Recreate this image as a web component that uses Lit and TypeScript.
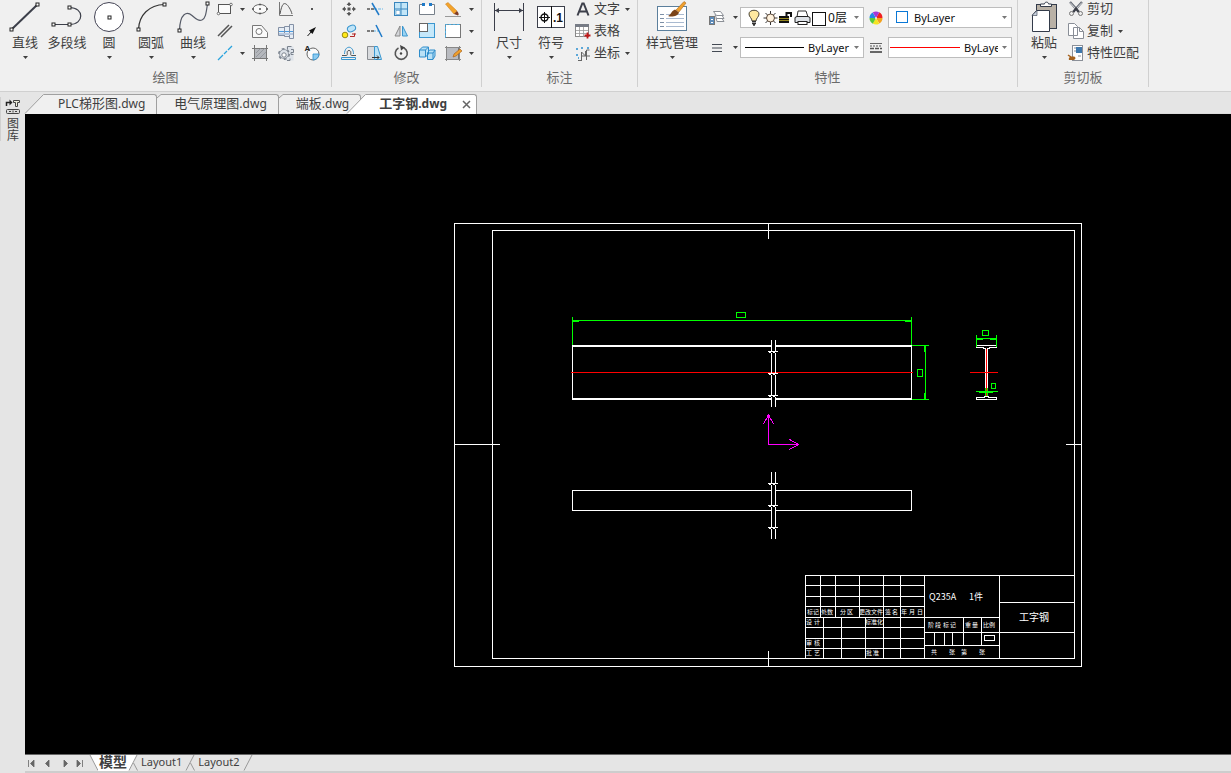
import { LitElement, html, svg, css, nothing, type TemplateResult } from "lit";
import { customElement, state } from "lit/decorators.js";

const DARK = "#3c3f4a";

/** Icon artwork is drawn in ribbon coordinates around the centre (cx, cy). */
const art = (cx: number, cy: number, w: number, h: number, body: unknown) => html`
  <svg class="art" aria-hidden="true" width=${w} height=${h} viewBox="${cx - w / 2} ${cy - h / 2} ${w} ${h}">${body}</svg>`;

const caret = html`<svg class="caret" aria-hidden="true" width="5" height="3" viewBox="0 0 5 3"><path d="M0 0h5L2.5 3z" fill="currentColor"/></svg>`;

const node = (x: number, y: number) => svg`<rect x=${x - 1.5} y=${y - 1.5} width="3" height="3" fill="#fff" stroke="#222" stroke-width="1"/>`;

/* ---------- large icons ---------- */
const lineIcon = svg`<path d="M11.5 29.5L37.5 4.5" stroke=${DARK} stroke-width="2"/>${node(11.5, 29.5)}${node(37.5, 4.5)}`;
const polylineIcon = svg`<path d="M53.5 24.5H69.5C84.500 24.500 84.500 7.500 69.500 7.500" fill="none" stroke=${DARK} stroke-width="1.200"/>${node(53.5, 24.5)}${node(69.5, 24.5)}${node(69.5, 7.5)}`;
const circleIcon = svg`<circle cx="109" cy="17" r="14.500" fill="#fff" stroke="#445"/>${node(109.5, 17.5)}`;
const arcIcon = svg`<path d="M138.500 29.500C139 15 149 5 164.500 4.500" fill="none" stroke="#333" stroke-width="1.200"/>${node(138.5, 29.5)}${node(164.5, 4.5)}`;
const splineIcon = svg`<path d="M179.500 30.500C180 13 187 11 192 15.500S199 21 202 20 206 15 207.500 3.500" fill="none" stroke="#555a66" stroke-width="1.200"/>${node(179.5, 30.5)}${node(207.5, 3.5)}`;
const dimIcon = svg`<path d="M494.500 3V31M523.500 3V31M495 10.500H523" stroke=${DARK}/><path d="M495 10.500l4-2.500v5zM523 10.500l-4-2.500v5z" fill=${DARK}/>`;
const symbolIcon = svg`<rect x="537.500" y="6.500" width="27" height="21" fill="#fff" stroke=${DARK}/><path d="M551.500 6V28M539 17.500H550M544.500 12V23" stroke="#111"/><circle cx="544.500" cy="17.500" r="3.500" fill="none" stroke="#111" stroke-width="1.400"/><text x="553" y="22" class="glyph">.1</text>`;
const styleIcon = svg`<rect x="657.500" y="6.500" width="29" height="24" fill="#fff" stroke="#5b7f9c"/>
  <path d="M660 14.500h4M660 18.500h4M660 22.500h4M660 26.500h4" stroke="#7c8fa6"/><path d="M666 14.500h18M666 18.500h18M666 22.500h18M666 26.500h18" stroke="#a9bad0"/>
  <path d="M676 10L684 1.500L686 3L679 12z" fill="#f0a02c" stroke="#a8661c" stroke-width=".600"/><path d="M668 16C671 15 671 11 675 9.500L679 12.500C678 16 672 17.500 668 16z" fill="#7a4318"/>`;
const pasteIcon = svg`<rect x="1036.500" y="4.500" width="20" height="24" fill="#b9b1a6" stroke="#333b4a"/><path d="M1040.500 6.500V4h4c0-2.500 4-2.500 4 0h3v2.500z" fill="#fff" stroke="#333b4a"/><path d="M1036.500 10.500h13v21h-17V15z" fill="#fff" stroke="#333b4a"/><path d="M1037 10.500v5h-5z" fill="#c9d2de" stroke="#333b4a" stroke-width=".600"/>`;

/* ---------- small drawing icons ---------- */
const rectI = svg`<rect x="218.500" y="4.500" width="12" height="9" fill="#fafafa" stroke="#555"/><circle cx="218.500" cy="13.500" r="1.300" fill="#fff" stroke="#555" stroke-width=".800"/><circle cx="231" cy="4.500" r="1.300" fill="#fff" stroke="#555" stroke-width=".800"/>`;
const ellipseI = svg`<ellipse cx="260" cy="9" rx="7" ry="4.500" fill="#fafafa" stroke="#666"/><path d="M259 9h2M259 4.500h2M252 9h2M266 9h2M259 13.500h2" stroke="#555" stroke-width="1.500"/>`;
const graphI = svg`<path d="M279.500 2V15.500H293" stroke="#777" fill="none"/><path d="M280 14C282 3 284 3 286 4S291 10 292 14" fill="none" stroke="#555"/>`;
const pointI = svg`<rect x="311" y="8" width="2" height="2" fill="#555"/>`;
const parallelI = svg`<path d="M218 36L229 25M221 37L232 26" stroke="#555" stroke-width="1.500"/>`;
const regionI = svg`<path d="M252.500 37.500V25.500H261.500L267.500 32.500V37.500z" fill="#fafafa" stroke="#777"/><circle cx="259" cy="31.500" r="3" fill="#fff" stroke="#777"/>`;
const shaftI = svg`<path d="M278.500 27.500h6v-1h5v-2h4v14h-4v-2h-5v-1h-6z" fill="#e6edf5" stroke="#8390a5"/><path d="M279 31.500h14" stroke="#4a9be0"/><path d="M284.500 27v9M289.500 25v13" stroke="#8390a5"/><path d="M279 34h14" stroke="#b8c8de" stroke-width="2"/>`;
const leaderI = svg`<path d="M307.500 36L312 31" stroke="#111"/><path d="M316 27L309 30.500L312.500 34z" fill="#111"/>`;
const axisI = svg`<path d="M218 60L223 55M224 54L227 51M228 50L232 46" stroke="#29a3de" stroke-width="1.300"/>`;
const hatchI = svg`<rect x="255" y="48" width="11" height="11" fill="#b4b7bc"/><path d="M252 48.500h16M252 58.500h16M254.500 45v16M266.500 45v16" stroke="#777"/><path d="M256 57l9-9M256 53l5-5M260 58l6-6" stroke="#8a8d92" stroke-width=".700"/>`;
const gearI = svg`<path d="M285.500 46.500h8v14h-8z" fill="#dde2e9"/><path d="M287.500 49v-2.500h4M291 49.500h2.500v3H291v2h2.500M290 58.500v2h-3" fill="none" stroke="#7a828d"/>
  <circle cx="284" cy="54" r="5" fill="#dde2e9" stroke="#7a828d" stroke-width="2" stroke-dasharray="2.600 2.600"/><circle cx="284" cy="54" r="4.500" fill="#dde2e9" stroke="#7a828d" stroke-width=".700"/><circle cx="284" cy="55" r="2.200" fill="#fff" stroke="#7a828d"/>`;
const detailI = svg`<circle cx="313" cy="54" r="6" fill="#fafafa" stroke="#666"/><path d="M313 54h6a6 6 0 0 1-6 6z" fill="#8dcbf0" stroke="#2a8fd0" stroke-width=".800"/><text x="304.500" y="51" class="tiny">A</text>`;

/* ---------- small editing icons ---------- */
const moveI = svg`<path d="M349 3v3M349 12v3M343 9h3M352 9h3" stroke="#555" stroke-width="1.500"/><path d="M346.500 5L349 2l2.500 3zM346.500 13L349 16l2.500-3zM345 6.500L342 9l3 2.500zM353 6.500L356 9l-3 2.500z" fill="#555"/><rect x="347.500" y="7.500" width="3" height="3" fill="#555"/>`;
const trimI = svg`<path d="M367 9h7" stroke="#555" stroke-dasharray="3 1" stroke-width="1.500"/><path d="M374 9h9" stroke="#63b5e8" stroke-dasharray="3 1"/><path d="M372 3L379 15" stroke="#1f7ac8" stroke-width="1.500"/>`;
const arrayI = svg`<rect x="394.500" y="2.500" width="13" height="13" fill="#c3e6f8" stroke="#3a86bd"/><path d="M401 2.500V15.500M394.500 9H407.500" stroke="#3a86bd"/><rect x="396" y="10.500" width="4" height="4" fill="#fff" stroke="#3a86bd" stroke-width=".500"/>`;
const breakI = svg`<path d="M424 4.500h-4.500v10h15v-10H430" fill="#fff" stroke="#77808a"/><path d="M422 4.500h3M429 4.500h3" fill="none" stroke="#1f7ac8" stroke-width="3"/>`;
const eraseI = svg`<path d="M445.500 4L448 2.500L457 11L454 14z" fill="#f3a32b" stroke="#c77713" stroke-width=".500"/><path d="M457 11l-3 3 4 1.500c1-1 1-2-1-4.500z" fill="#7f3c25"/><path d="M445 16.500h16" stroke="#999"/>`;
const copyI = svg`<circle cx="345" cy="35" r="2.800" fill="#ffe81a" stroke="#7d7200" stroke-width=".800"/><ellipse cx="351.500" cy="28.500" rx="4.300" ry="3" transform="rotate(-25 351.500 28.500)" fill="#bfe4f7" stroke="#3a96cf"/><path d="M350 36.500h4.500v-3M352 34h4" fill="none" stroke="#b32828"/>`;
const extendI = svg`<path d="M367 31h7" stroke="#555" stroke-dasharray="3 1" stroke-width="1.500"/><path d="M374 31h5" stroke="#63b5e8" stroke-dasharray="2 1"/><path d="M376 25L382 37" stroke="#1f7ac8" stroke-width="1.500"/>`;
const mirrorI = svg`<path d="M400 26v10h-5z" fill="#d4d6da" stroke="#888"/><path d="M402.500 26v10h5z" fill="#9bd3f2" stroke="#3a96cf"/>`;
const scaleI = svg`<rect x="419.500" y="23.500" width="15" height="14" fill="#c5e8fa" stroke="#3a96cf"/><rect x="419.500" y="23.500" width="8" height="8" fill="#fff" stroke="#666"/>`;
const stretchI = svg`<rect x="445.500" y="24.500" width="15" height="13" fill="#fff" stroke="#777"/><path d="M445.500 37.500V24.500H460" fill="none" stroke="#4fb0e5" stroke-dasharray="3 1"/>`;
const offsetI = svg`<path d="M342 55.500h4.500c2 0-1-5 2.500-5s.500 5 2.500 5h4.500" fill="none" stroke="#555"/><path d="M341.500 59.500h14v-2h-14zM344.500 54c0-9 9-9 9 0" fill="none" stroke="#3a96cf"/>`;
const taperI = svg`<path d="M367.500 46.500h7v13h-7z" fill="#d9dbde" stroke="#8a8d92"/><path d="M374.500 46.500h3l4 13h-7z" fill="#b9e1f6" stroke="#3a96cf"/><path d="M372 57.500h7M377 55.500l2 2-2 2" fill="none" stroke="#333"/>`;
const rotateI = svg`<path d="M398.500 48A6 6 0 1 0 404 48" fill="none" stroke="#555" stroke-width="1.600"/><path d="M400 45l5 2.500-4 3z" fill="#444"/><circle cx="401" cy="53.500" r="1.200" fill="#444"/>`;
const blockI = svg`<path d="M419.500 50l3-3h6v7l-3 3h-6zM427.500 53l2-3h5.500v6l-2 3.500h-5.500z" fill="#b9e1f6" stroke="#2f8dcb"/><path d="M419.500 50h6v7M425.500 50l3-3M427.500 53h5.500v6M433 53l2-3" fill="none" stroke="#2f8dcb"/>`;
const hatchEditI = svg`<rect x="446.500" y="47.500" width="12" height="12" fill="#b9bbc0" stroke="#777"/><path d="M445 47.500h16M445 59.500h16M446.500 46v15M459.500 46v15" stroke="#888"/><path d="M453 57l1-3 6-5 2 2-6 5z" fill="#f0a02c" stroke="#a05a17" stroke-width=".600"/>`;

/* ---------- annotation, property and clipboard icons ---------- */
const textI = svg`<path d="M577.500 15.500L582.300 3.500h1.400L588.500 15.500M579.500 11.500h7" fill="none" stroke="#3c3f4a" stroke-width="2"/>`;
const tableI = svg`<rect x="575.500" y="24.500" width="13" height="12" fill="#fff" stroke="#888"/><path d="M575 25.500h14" stroke="#777c86" stroke-width="3"/><path d="M579.500 27v10M583.500 27v10M576 30.500h12M576 33.500h12" stroke="#999" stroke-width=".800"/><path d="M587.500 32.500v6M584.500 35.500h6" stroke="#c01818" stroke-width="1.800"/>`;
const coordI = svg`<path d="M581.500 60V52l4 4v-5M578 60.500h4M586.500 60V50h3M581 56h9" fill="none" stroke="#666"/><path d="M577 48v3M581 48h2M587 48h2M577 54v2M578 58h1" stroke="#2a8fd0" stroke-width="1.500" stroke-dasharray="2 1"/>`;
const layersI = svg`<path d="M713.500 11.500h7l3 4-7 0zM715 14.500l1.500 4h7.500l-2-3M716 18l1 3.500h7l-2-3" fill="#fff" stroke="#8b8f96"/><rect x="709.500" y="16.500" width="5" height="8" fill="#5e8cba" stroke="#777"/><path d="M711 19.500h2M711 22.500h2" stroke="#fff"/>`;
const linesI = svg`<path d="M712 44.500h10M712 48h10M712 51.500h10" stroke="#444a54" stroke-width="1.200"/>`;
const wheelColors = ["#f02020", "#f4a21c", "#f5e521", "#57ca3a", "#2386e8", "#a436d8"];
const wheelI = svg`${wheelColors.map((c, i) => svg`<path d="M875 18L881.500 18A6.500 6.500 0 0 1 878.250 23.600z" transform="rotate(${i * 60 - 60} 875 18)" fill=${c}/>`)}<circle cx="875" cy="18" r="1" fill="#f6e6ef"/>`;
const weightI = svg`<path d="M869 43.500h12" stroke="#666"/><path d="M869 46h12" stroke="#555" stroke-dasharray="2 1"/><path d="M869 48.500h12" stroke="#555" stroke-width="1.500" stroke-dasharray="4 1"/><path d="M869 52h12" stroke="#666" stroke-width="2"/>`;
const cutI = svg`<path d="M1071 2L1080 12M1083 2L1074 12" stroke="#666b75" stroke-width="2.400"/><path d="M1071 2.500L1077 9M1083 2.500L1077 9" stroke="#d7dade"/><path d="M1074.500 12L1077 8.500L1079.500 12" fill="none" stroke="#3c3f48" stroke-width="2"/><circle cx="1072.500" cy="13.500" r="2" fill="#eee" stroke="#777"/><circle cx="1081.500" cy="13.500" r="2" fill="#eee" stroke="#777"/>`;
const copyDocI = svg`<path d="M1069.500 23.500h6l3 3v9h-9zM1074.500 27.500h6l4 4v7h-10z" fill="#fff" stroke="#898e97"/><path d="M1080.500 27.500v4h4" fill="none" stroke="#898e97"/>`;
const matchI = svg`<rect x="1073.500" y="45.500" width="10" height="15" fill="#fff" stroke="#8a8f98"/><rect x="1077" y="47" width="6" height="6" fill="#3d78ae"/><path d="M1075 48h2M1075 51h2M1079 56h3" stroke="#8a8f98"/><path d="M1070 60c-1-3 2-4 5-3.500 2 .500 2 3-.500 3.500z" fill="#a5611d"/><path d="M1069 55l3 2" stroke="#a5611d" stroke-width="1.500"/>`;
const bulbI = svg`<path d="M748.500 21c0-3-3-4-3-7 0-5 10-5 10 0 0 3-3 4-3 7z" fill="#ffe9a0" stroke="#4a4538"/><path d="M748.500 21.500h4M748.500 23.500h4M749.500 25h2" stroke="#333" stroke-width="1.400"/>`;
const sunI = svg`<path d="M767.500 11v14M760.500 18h14M762.500 13l10 10M772.500 13l-10 10" stroke="#333"/><circle cx="767.500" cy="18" r="4" fill="#fff2dd" stroke="#5a4636"/>`;
const lockI = svg`<path d="M783.500 17V13h4.500v4" fill="none" stroke="#111" stroke-width="2"/><rect x="776" y="16" width="10" height="7" fill="#111"/><path d="M776 18.500h10M776 20.500h10" stroke="#b7a624" stroke-width=".800"/>`;
const printI = svg`<path d="M793.500 17l1-6h8l2 6" fill="#fff" stroke="#333"/><path d="M791.500 17.500l2-1h11l2 1v5h-15z" fill="#dfe3e8" stroke="#222"/><rect x="794.500" y="21.500" width="9" height="3" fill="#fff" stroke="#222"/>`;

type Small = { name: string; cx: number; icon: unknown; menu?: boolean };
const drawTools: Small[][] = [
  [{ name: "矩形", cx: 225, icon: rectI, menu: true }, { name: "椭圆", cx: 260, icon: ellipseI }, { name: "公式曲线", cx: 286, icon: graphI }, { name: "点", cx: 312, icon: pointI }],
  [{ name: "平行线", cx: 225, icon: parallelI }, { name: "轮廓", cx: 260, icon: regionI }, { name: "轴孔", cx: 286, icon: shaftI }, { name: "箭头", cx: 312, icon: leaderI }],
  [{ name: "中心线", cx: 225, icon: axisI, menu: true }, { name: "剖面线", cx: 260, icon: hatchI }, { name: "齿轮", cx: 286, icon: gearI }, { name: "局部放大", cx: 312, icon: detailI }],
];
const editTools: Small[][] = [
  [{ name: "平移", cx: 349, icon: moveI }, { name: "裁剪", cx: 375, icon: trimI }, { name: "阵列", cx: 401, icon: arrayI }, { name: "打断", cx: 427, icon: breakI }, { name: "删除", cx: 453, icon: eraseI, menu: true }],
  [{ name: "平移复制", cx: 349, icon: copyI }, { name: "延伸", cx: 375, icon: extendI }, { name: "镜像", cx: 401, icon: mirrorI }, { name: "缩放", cx: 427, icon: scaleI }, { name: "拉伸", cx: 453, icon: stretchI, menu: true }],
  [{ name: "等距线", cx: 349, icon: offsetI }, { name: "过渡", cx: 375, icon: taperI }, { name: "旋转", cx: 401, icon: rotateI }, { name: "分解", cx: 427, icon: blockI }, { name: "编辑填充", cx: 453, icon: hatchEditI, menu: true }],
];

@customElement("cad-drawing")
export class CadDrawing extends LitElement {
  static styles = css`
    :host { display: block; background: #000; overflow: hidden; }
    svg { display: block; width: 100%; height: auto; }
    .w { stroke: #fff; } .g { stroke: #0f0; } .r { stroke: #f00; } .m { stroke: #f0f; }
    text { fill: #fff; stroke: none; font-family: "Noto Sans CJK SC", sans-serif; font-size: 6px; }
    text.title { font-size: 10px; }
    text.code { font-family: "Noto Sans CJK SC", sans-serif; font-size: 9px; }
  `;

  private breaks(top: number) {
    return svg`<path class="w" d="M771 ${top}v66M775 ${top}v66"/>
      ${[11, 33, 55].map((d) => svg`<path class="w" d="M768 ${top + d}h9M769 ${top + d + 1}h1M773 ${top + d + 1}h1"/>
        <path stroke="#000" d="M771 ${top + d + 1}h.01M775 ${top + d + 1}h.01"/>`)}`;
  }

  render() {
    const labels: [number, number, string][] = [
      [807, 614, "标记"], [821, 614, "处数"], [840, 614, "分"], [847, 614, "区"], [859, 614, "更改文件"], [885, 614, "签"], [892, 614, "名"],
      [901, 614, "年"], [909, 614, "月"], [917, 614, "日"], [806, 624, "设"], [814, 624, "计"], [865, 624, "标准化"],
      [806, 645, "审"], [814, 645, "核"], [806, 655, "工"], [814, 655, "艺"], [866, 655, "批"], [873, 655, "准"],
      [928, 627, "阶"], [935, 627, "段"], [943, 627, "标"], [950, 627, "记"], [965, 627, "重"], [972, 627, "量"], [983, 627, "比"], [989, 627, "例"],
      [931, 654, "共"], [949, 654, "张"], [961, 654, "第"], [979, 654, "张"],
    ];
    return html`<svg viewBox="25 114 1206 640" role="img" aria-label="工字钢">
      <g transform="translate(.5 .5)" fill="none" stroke-width="1" stroke-linecap="square" shape-rendering="crispEdges">
        <path class="w" d="M454 223H1081V666H454zM492 230H1074V658H492zM768 223V238M768 651V666M454 444H499M1066 444H1081"/>
        <path class="w" d="M572 345H771M775 345H911M572 346H771M775 346H911M572 398H771M775 398H911M572 399H771M775 399H911M572 345V399M911 345V399"/>
        <path class="r" d="M571 372H912"/>
        <path class="w" d="M771 490H572V510H771M775 490H911V510H775"/>
        ${this.breaks(340)}${this.breaks(472)}
        <path class="g" d="M572 317V344M911 317V344M572 320H911M572 321H578M905 321H911M736 312H745V317H736z"/>
        <path class="g" d="M912 345H928M912 399H928M925 345V399M924 345V351M924 393V399M917 369H922V376H917z"/>
        <path class="w" d="M976 345H996V347H989M976 345V347H983M983 348H985V396M989 348H987V396M984 396H988M976 397H984M976 397V399H996V397H988"/>
        <path class="r" d="M970 372H997M986 349V395"/>
        <path class="g" d="M976 335V346M996 335V346M976 338H996M976 339H982M990 339H996M982 330H988V335H982z"/>
        <path class="g" d="M976 391H997M979 392H992M985 388V395M987 388V395M991 383H995V388H991z"/>
        <path class="m" d="M768 414V444H798M768 415L763 423M768 415L773 423M798 444L789 439M798 444L789 449M767 415H769M797 443V445"/>
        <path class="w" d="M805 658V575H1074M805 585H924M805 596H924M805 606H924M805 617H999M805 627H924M805 638H924M805 648H924"/>
        <path class="w" d="M820 575V617M835 575V617M859 575V617M883 575V658M900 575V658M924 575V658M823 617V658M841 617V658M865 617V658"/>
        <path class="w" d="M999 575V658M999 602H1074M924 632H1074M924 645H999M963 617V645M981 617V645M934 632V645M944 632V645M952 632V645M984 635H994V640H984z"/>
      </g>
      ${labels.map(([x, y, t]) => svg`<text x=${x} y=${y}>${t}</text>`)}
      <text class="code" x="929" y="600">Q235A</text>
      <text class="code" x="969" y="600">1件</text>
      <text class="title" x="1019" y="621">工字钢</text>
    </svg>`;
  }
}

@customElement("app-root")
export class AppRoot extends LitElement {
  static styles = css`
    :host {
      display: flex; flex-direction: column; min-height: 100vh; background: #e5e5e5; color: #3f3f3f;
      font: 13px/20px "Noto Sans", "Noto Sans CJK SC", sans-serif; --line: #d0d0d0;
    }
    button { font: inherit; color: inherit; background: none; border: 0; padding: 0; margin: 0; white-space: nowrap; }
    svg { display: block; overflow: visible; flex: none; }
    .ribbon { display: flex; background: #f0f0f0; border-bottom: 1px solid var(--line); padding-bottom: 4px; font-family: "Noto Sans CJK SC", sans-serif; }
    .group { display: flex; flex-direction: column; border-right: 1px solid var(--line); }
    .tools { display: flex; height: 67px; }
    .caption { text-align: center; color: #6b6b6b; font-size: 13px; line-height: 20px; }
    .big { display: flex; flex-direction: column; align-items: center; width: 42px; height: 62px; }
    .big .caret { margin-top: 4px; }
    .wide { width: 60px; }
    .draw { padding-left: 4px; padding-right: 7px; }
    .edit { padding-left: 4px; padding-right: 5px; }
    .note { padding-left: 6px; padding-right: 7px; }
    .prop { padding-left: 4px; padding-right: 5px; }
    .clip { padding-left: 5px; padding-right: 9px; }
    .rows { display: flex; flex-direction: column; margin-top: -2px; }
    .rows.text { margin-left: 2px; }
    .row { display: grid; height: 22px; align-items: center; justify-items: center; }
    .row.d { grid-template-columns: 22px 12px 24px 28px 24px; }
    .row.e { grid-template-columns: repeat(5, 26px) 10px; }
    .textrow { display: flex; align-items: center; height: 22px; gap: 2px; }
    .textrow span { padding-bottom: 2px; }
    .textrow .caret { margin-left: 3px; }
    .props { display: grid; grid-template-columns: 28px 10px 124px 24px 124px; grid-auto-rows: 21px; row-gap: 9px; padding-top: 7px; justify-items: center; align-items: center; align-content: start; }
    .combo { display: flex; align-items: center; box-sizing: border-box; width: 124px; height: 21px; border: 1px solid #bdbdbd; background: #fff; padding: 0 4px; color: #111; }
    .combo select { appearance: none; flex: 1; min-width: 0; border: 0; padding: 0; margin: 0 4px 0 0; background: none; color: inherit; font: 11px/16px "Noto Sans", "Noto Sans CJK SC", sans-serif; outline: none; }
    .combo .caret { color: #777; }
    .combo select.layer { font-size: 12px; margin: 0 0 0 1px; }
    .combo .sample { margin-right: 4px; }
    .rule { height: 1px; background: #000; flex: none; width: 59px; margin-right: 4px; }
    .rule.red { background: #f00; width: 70px; margin-left: -3px; }
    .glyph { font: bold 12px "Liberation Sans", sans-serif; fill: #111; }
    .tiny { font: bold 8px "Liberation Sans", sans-serif; fill: #222; }
    .body { display: flex; flex: 1; }
    .side { width: 25px; padding-top: 5px; box-sizing: border-box; flex: none; }
    .library { display: flex; flex-direction: column; align-items: center; width: 24px; border-left: 1px solid var(--line); box-sizing: border-box; gap: 2px; font: 12px/12px "Noto Sans CJK SC", sans-serif; }
    .library span { writing-mode: vertical-rl; }
    .work { display: flex; flex-direction: column; flex: 1; min-width: 0; }
    .tabs { display: flex; align-items: flex-end; height: 22px; box-sizing: border-box; border-bottom: 1px solid #dcdcdc; }
    .tab { display: flex; height: 20px; margin-bottom: -1px; }
    .tab .face { display: flex; align-items: center; border-top: 1px solid #a0a0a0; border-right: 1px solid #a0a0a0; border-top-right-radius: 3px; background: #f0f0f0; padding: 0 11px 0 12px; box-sizing: border-box; height: 20px; }
    .tab .face button { padding-bottom: 2px; }
    .tab.first .face { padding-left: 14px; }
    .tab.active { margin-left: -14px; font-weight: bold; position: relative; }
    .tab.active .face { background: #fff; padding: 0 5px 0 13px; }
    .latin { font-size: 12px; }
    .tab .face .close { width: 9px; height: 9px; padding: 0; margin-left: 15px; color: #666; }
    cad-drawing { flex: 1; }
    .sheets { display: flex; height: 19px; box-sizing: border-box; border-top: 1px solid #666; border-bottom: 2px solid #cdcdcd; font-size: 11px; line-height: 14px; }
    .nav { display: flex; width: 65px; color: #666; }
    .nav button { flex: 1; }
    .sheet { display: flex; height: 16px; }
    .sheet .name { padding: 0 4px 2px 4px; }
    .sheet.active { font-weight: bold; font-size: 14px; line-height: 14px; }
    .sheet.active .name { background: #fff; padding: 0 2px 2px 1px; }
  `;

  @state() private doc = 3;
  @state() private sheet = 0;

  private big(label: string, cx: number, icon: unknown, menu = true, wide = false) {
    return html`<button class="big ${wide ? "wide" : ""}">${art(cx, 16, 36, 32, icon)}<span>${label}</span>${menu ? caret : nothing}</button>`;
  }

  private grid(rows: Small[][], kind: "d" | "e") {
    return html`<div class="rows">${rows.map((row, r) => html`<div class="row ${kind}">
      ${row.map((t, i) => html`<button aria-label=${t.name}>${art(t.cx, 9 + r * 22, 18, 18, t.icon)}</button>
        ${t.menu ? html`<button aria-label="${t.name}选项">${caret}</button>` : kind === "d" && i === 0 ? html`<span></span>` : nothing}`)}
    </div>`)}</div>`;
  }

  private textTool(label: string, cx: number, cy: number, icon: unknown, menu = false) {
    return html`<button class="textrow">${art(cx, cy, 18, 18, icon)}<span>${label}</span>${menu ? caret : nothing}</button>`;
  }

  private mixed(text: string) {
    return text.split(/([\x20-\x7e]+)/).map((p) => (/^[\x20-\x7e]/.test(p) ? html`<span class="latin">${p}</span>` : p));
  }

  private group(kind: string, caption: string, tools: TemplateResult) {
    return html`<section class="group" aria-label=${caption}><div class="tools ${kind}">${tools}</div><div class="caption">${caption}</div></section>`;
  }

  private docTab(name: string, i: number) {
    const active = i === this.doc;
    const slope = i === 0 || active ? 19 : 5;
    const fill = active ? "#fff" : "#f0f0f0";
    const edge = slope === 19
      ? html`<svg width="19" height="20" viewBox="0 0 19 20" aria-hidden="true"><path d="M0 20L19 0V20z" fill=${fill}/><path d="M0 19.500L18.500.500H19" fill="none" stroke="#a0a0a0"/></svg>`
      : html`<svg width="5" height="20" viewBox="0 0 5 20" aria-hidden="true"><path d="M0 4L4 0H5V20H0z" fill=${fill}/><path d="M0 4L4 .500H5" fill="none" stroke="#a0a0a0"/></svg>`;
    return html`<div class="tab ${active ? "active" : i === 0 ? "first" : ""}">${edge}<div class="face">
      <button role="tab" aria-selected=${active}>${this.mixed(name)}</button>
      ${active ? html`<button class="close" aria-label="关闭"><svg width="9" height="9" viewBox="0 0 9 9"><path d="M1 1l7 7M8 1L1 8" stroke="currentColor" stroke-width="1.500"/></svg></button>` : nothing}
    </div></div>`;
  }

  render() {
    const navs: [string, string][] = [["第一页", "M3.500 5v7M9 5v7L5.500 8.500z"], ["上一页", "M8 5v7L4.500 8.500z"], ["下一页", "M6 5v7l3.500-3.500z"], ["最后一页", "M3 5v7l3.500-3.500zM8.500 5v7"]];
    const sheets = ["模型", "Layout1", "Layout2"];
    return html`
      <header class="ribbon">
        ${this.group("draw", "绘图", html`
          ${this.big("直线", 25, lineIcon)}${this.big("多段线", 67, polylineIcon, false)}${this.big("圆", 109, circleIcon)}
          ${this.big("圆弧", 151, arcIcon)}${this.big("曲线", 193, splineIcon)}${this.grid(drawTools, "d")}`)}
        ${this.group("edit", "修改", this.grid(editTools, "e"))}
        ${this.group("note", "标注", html`
          ${this.big("尺寸", 509, dimIcon)}${this.big("符号", 551, symbolIcon)}
          <div class="rows text">${this.textTool("文字", 583, 9, textI, true)}${this.textTool("表格", 583, 31, tableI)}${this.textTool("坐标", 583, 53, coordI, true)}</div>`)}
        ${this.group("prop", "特性", html`
          ${this.big("样式管理", 672, styleIcon, true, true)}
          <div class="props">
            <button aria-label="图层">${art(716, 18, 18, 18, layersI)}</button><button aria-label="图层选项">${caret}</button>
            <div class="combo">${art(750, 18, 17, 18, bulbI)}${art(767, 18, 16, 18, sunI)}${art(783, 18, 16, 18, lockI)}${art(799, 18, 17, 18, printI)}
              <svg width="16" height="16" viewBox="0 0 16 16" aria-hidden="true"><rect x="1.500" y="2.500" width="13" height="13" fill="#fff" stroke="#111"/></svg>
              <select class="layer" aria-label="当前图层"><option>0层</option></select>${caret}</div>
            <button aria-label="颜色">${art(875, 18, 16, 16, wheelI)}</button>
            <div class="combo"><svg class="sample" width="17" height="13" viewBox="0 0 17 13" aria-hidden="true"><rect x="3.500" y=".500" width="11" height="11" fill="#fff" stroke="#0a78d6"/></svg>
              <select aria-label="当前颜色"><option>ByLayer</option></select>${caret}</div>
            <button aria-label="线型">${art(716, 48, 18, 16, linesI)}</button><button aria-label="线型选项">${caret}</button>
            <div class="combo"><span class="rule"></span><select aria-label="当前线型"><option>ByLayer</option></select>${caret}</div>
            <button aria-label="线宽">${art(875, 48, 16, 16, weightI)}</button>
            <div class="combo"><span class="rule red"></span><select aria-label="当前线宽"><option>ByLayer</option></select>${caret}</div>
          </div>`)}
        ${this.group("clip", "剪切板", html`
          ${this.big("粘贴", 1044, pasteIcon)}
          <div class="rows text">${this.textTool("剪切", 1077, 9, cutI)}${this.textTool("复制", 1077, 31, copyDocI, true)}${this.textTool("特性匹配", 1077, 53, matchI)}</div>`)}
      </header>
      <div class="body">
        <aside class="side">
          <button class="library"><svg width="16" height="18" viewBox="0 0 16 18" aria-hidden="true">
            <path d="M1.500 9V5.500h4" fill="none" stroke="#222" stroke-width="1.500"/><path d="M4.500 2.500l3 3-3 3z" fill="#222"/><path d="M8.500 3.500h6v2h-2v4h-2v-4h-2z" fill="#eeeedd" stroke="#444"/>
            <rect x="1.500" y="12.500" width="13" height="4" rx="1" fill="#ddd" stroke="#444"/><path d="M4 14.500h2M8 13.500v2M10 14.500h2" stroke="#444"/></svg><span>图库</span></button>
        </aside>
        <main class="work">
          <div class="tabs" role="tablist">${["PLC梯形图.dwg", "电气原理图.dwg", "端板.dwg", "工字钢.dwg"].map((n, i) => this.docTab(n, i))}</div>
          <cad-drawing></cad-drawing>
          <footer class="sheets">
            <div class="nav">${navs.map(([n, d]) => html`<button aria-label=${n}><svg width="16" height="16" viewBox="0 0 16 16"><path d=${d} fill="currentColor" stroke="currentColor" stroke-width=".800"/></svg></button>`)}</div>
            <svg width="8" height="16" viewBox="0 0 8 16" aria-hidden="true"><path d="M0 0H8V16z" fill="#fff"/><path d="M0 0L8 15.500" stroke="#999"/></svg>
            ${sheets.map((s, i) => html`<div class="sheet ${i === this.sheet ? "active" : ""}">
              <button class="name" @click=${() => (this.sheet = i)}>${s}</button>
              <svg width="8" height="16" viewBox="0 0 8 16" aria-hidden="true">${i === this.sheet ? svg`<path d="M0 0H8L0 16z" fill="#fff"/>` : nothing}
                <path d="M8 0L0 15.500" stroke="#999"/>${i < 2 ? svg`<path d="M4.500 8L8.500 15.500" stroke="#999"/>` : nothing}</svg>
            </div>`)}
          </footer>
        </main>
      </div>`;
  }
}
